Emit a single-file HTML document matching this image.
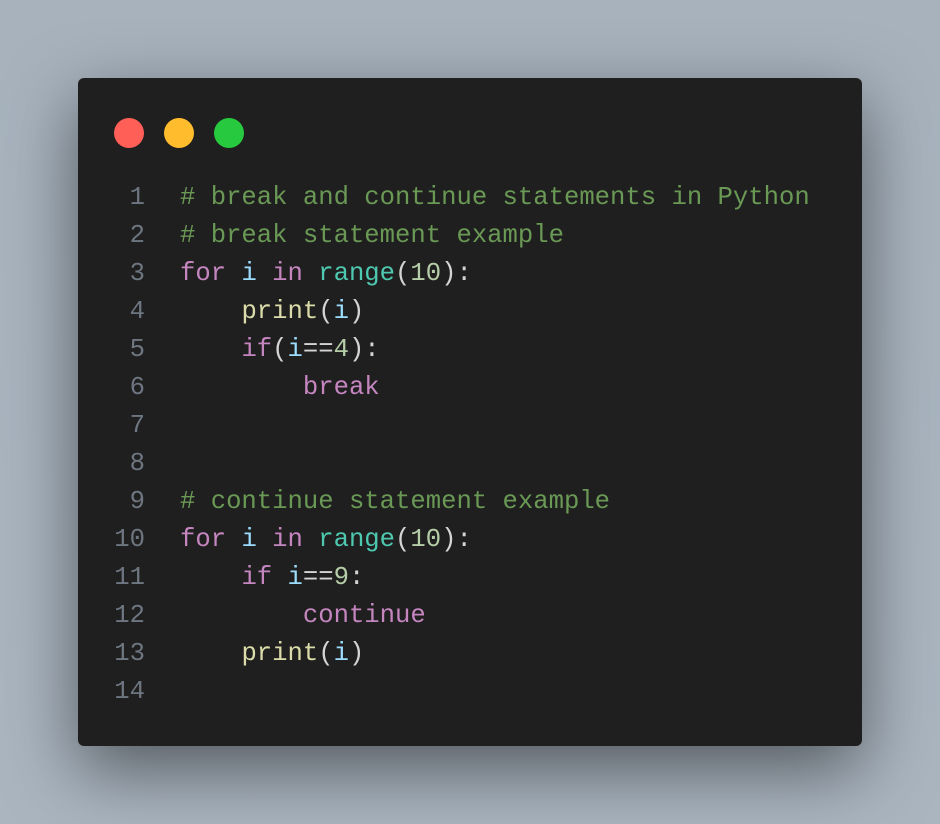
<!DOCTYPE html>
<html><head><meta charset="utf-8"><style>
html,body{margin:0;padding:0}
body{width:940px;height:824px;background:linear-gradient(180deg,#a7b2bd,#aab5c0);position:relative;overflow:hidden}
.card{position:absolute;left:78px;top:78px;width:784px;height:668px;background:#1f1f1f;border-radius:6px;box-shadow:0 24px 70px rgba(0,0,0,.5)}
.dot{position:absolute;top:40px;width:30px;height:30px;border-radius:50%}
.code{position:absolute;left:0;top:101px;font-family:"Liberation Mono",monospace;font-size:25.6px;line-height:38px;color:#d4d4d4;white-space:pre}
.ln{display:inline-block;width:67px;text-align:right;color:#6e7681;margin-right:35px}
.c{color:#6a9955}.k{color:#c586c0}.v{color:#9cdcfe}.t{color:#4ec9b0}.f{color:#dcdcaa}.n{color:#b5cea8}
</style></head><body>
<div class="card">
<div class="dot" style="left:36px;background:#ff5f56"></div>
<div class="dot" style="left:86px;background:#ffbd2e"></div>
<div class="dot" style="left:136px;background:#27c93f"></div>
<div class="code"><span class="ln">1</span><span class="c"># break and continue statements in Python</span>
<span class="ln">2</span><span class="c"># break statement example</span>
<span class="ln">3</span><span class="k">for</span> <span class="v">i</span> <span class="k">in</span> <span class="t">range</span>(<span class="n">10</span>):
<span class="ln">4</span>    <span class="f">print</span>(<span class="v">i</span>)
<span class="ln">5</span>    <span class="k">if</span>(<span class="v">i</span>==<span class="n">4</span>):
<span class="ln">6</span>        <span class="k">break</span>
<span class="ln">7</span>
<span class="ln">8</span>
<span class="ln">9</span><span class="c"># continue statement example</span>
<span class="ln">10</span><span class="k">for</span> <span class="v">i</span> <span class="k">in</span> <span class="t">range</span>(<span class="n">10</span>):
<span class="ln">11</span>    <span class="k">if</span> <span class="v">i</span>==<span class="n">9</span>:
<span class="ln">12</span>        <span class="k">continue</span>
<span class="ln">13</span>    <span class="f">print</span>(<span class="v">i</span>)
<span class="ln">14</span></div>
</div>
</body></html>
